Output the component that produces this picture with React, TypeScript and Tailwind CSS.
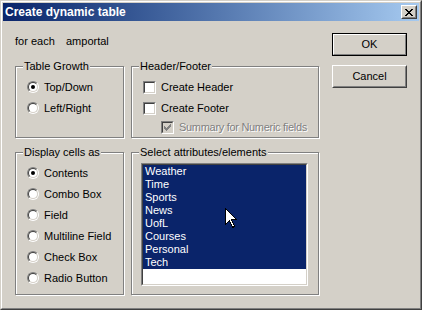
import type { ReactNode } from 'react';

const FONT = "font-['Liberation_Sans',Arial,sans-serif]";

function Radio({ checked = false }: { checked?: boolean }) {
  return (
    <span className="flex h-3 w-3 shrink-0 rounded-full border border-t-[#808080] border-l-[#808080] border-r-white border-b-white">
      <span className="flex h-full w-full items-center justify-center rounded-full border border-t-[#404040] border-l-[#404040] border-r-[#d4d0c8] border-b-[#d4d0c8] bg-white">
        {checked && <span className="h-1 w-1 rounded-full bg-black" />}
      </span>
    </span>
  );
}

function Check({ checked = false, disabled = false }: { checked?: boolean; disabled?: boolean }) {
  return (
    <span className="flex h-[13px] w-[13px] shrink-0 border border-t-[#808080] border-l-[#808080] border-r-white border-b-white">
      <span className={`flex h-full w-full items-center justify-center border border-t-[#404040] border-l-[#404040] border-r-[#d4d0c8] border-b-[#d4d0c8] ${disabled ? 'bg-[#d4d0c8]' : 'bg-white'}`}>
        {checked && (
          <svg width="7" height="7" viewBox="0 0 7 7" shapeRendering="crispEdges">
            <path
              d="M6 0h1v1h-1z M5 1h2v1h-2z M0 2h1v1h-1z M4 2h3v1h-3z M0 3h2v1h-2z M3 3h3v1h-3z M0 4h5v1h-5z M1 5h3v1h-3z M2 6h1v1h-1z"
              fill={disabled ? '#808080' : '#000'}
            />
          </svg>
        )}
      </span>
    </span>
  );
}

function Group({ label, className = '', children }: { label: string; className?: string; children?: ReactNode }) {
  return (
    <div className={`relative border border-[#808080] shadow-[inset_1px_1px_0_#fff,1px_1px_0_#fff] ${className}`}>
      <span className="absolute -top-[7px] left-[7px] bg-[#d4d0c8] px-px">{label}</span>
      {children}
    </div>
  );
}

function RadioRow({ label, checked }: { label: string; checked?: boolean }) {
  return (
    <div className="flex h-3 items-center gap-[5px]">
      <Radio checked={checked} />
      <span>{label}</span>
    </div>
  );
}

function CloseButton() {
  return (
    <span className="flex h-[14px] w-4 border border-t-white border-l-white border-r-[#404040] border-b-[#404040] bg-[#d4d0c8]">
      <span className="flex h-full w-full items-center justify-center border border-t-[#d4d0c8] border-l-[#d4d0c8] border-r-[#808080] border-b-[#808080]">
        <svg width="8" height="7" viewBox="0 0 8 7" shapeRendering="crispEdges">
          <path
            d="M0 0h2v1h-2z M6 0h2v1h-2z M1 1h2v1h-2z M5 1h2v1h-2z M2 2h4v1h-4z M3 3h2v1h-2z M2 4h4v1h-4z M1 5h2v1h-2z M5 5h2v1h-2z M0 6h2v1h-2z M6 6h2v1h-2z"
            fill="#000"
          />
        </svg>
      </span>
    </span>
  );
}

function Button({ label, isDefault = false }: { label: string; isDefault?: boolean }) {
  if (isDefault) {
    return (
      <button className="flex h-[23px] w-[75px] border border-black p-0">
        <span className="flex h-full w-full items-center justify-center border border-t-white border-l-white border-r-[#808080] border-b-[#808080]">
          {label}
        </span>
      </button>
    );
  }
  return (
    <button className="flex h-[23px] w-[75px] border border-t-white border-l-white border-r-[#404040] border-b-[#404040] p-0">
      <span className="flex h-full w-full items-center justify-center border border-t-[#d4d0c8] border-l-[#d4d0c8] border-r-[#808080] border-b-[#808080]">
        {label}
      </span>
    </button>
  );
}

const ITEMS = ['Weather', 'Time', 'Sports', 'News', 'UofL', 'Courses', 'Personal', 'Tech'];
const DISPLAY = ['Contents', 'Combo Box', 'Field', 'Multiline Field', 'Check Box', 'Radio Button'];

export default function App() {
  return (
    <div className={`h-[310px] w-[422px] border border-t-[#d4d0c8] border-l-[#d4d0c8] border-r-[#404040] border-b-[#404040] bg-[#d4d0c8] text-[11px] leading-[13px] text-black ${FONT}`}>
      <div className="flex h-full flex-col border border-t-white border-l-white border-r-[#808080] border-b-[#808080] p-px">
        <div className="flex h-[18px] shrink-0 items-center justify-between bg-linear-to-r from-[#0a246a] to-[#a6caf0] pr-[2px] pl-[2px]">
          <span className="text-[12px] font-bold text-white">Create dynamic table</span>
          <CloseButton />
        </div>

        <div className="flex pl-[12px]">
          <div className="flex w-[304px] flex-col">
            <div className="mt-[14px] flex h-[13px]">
              <span className="w-[51px]">for each</span>
              <span>amportal</span>
            </div>

            <div className="mt-[18px] flex gap-[7px]">
              <Group label="Table Growth" className="h-[72px] w-[109px]">
                <div className="flex flex-col gap-[9px] pt-[14px] pl-[11px]">
                  <RadioRow label="Top/Down" checked />
                  <RadioRow label="Left/Right" />
                </div>
              </Group>
              <Group label="Header/Footer" className="h-[72px] w-[188px]">
                <div className="flex flex-col pt-[14px] pl-[11px]">
                  <div className="flex h-[13px] items-center gap-[5px]">
                    <Check />
                    <span>Create Header</span>
                  </div>
                  <div className="mt-[8px] flex h-[13px] items-center gap-[5px]">
                    <Check />
                    <span>Create Footer</span>
                  </div>
                  <div className="mt-[6px] flex h-[13px] items-center gap-[5px] pl-[18px]">
                    <Check checked disabled />
                    <span className="tracking-[-0.3px] text-[#808080] [text-shadow:1px_1px_0_#fff]">Summary for Numeric fields</span>
                  </div>
                </div>
              </Group>
            </div>

            <div className="mt-[14px] flex gap-[7px]">
              <Group label="Display cells as" className="h-[143px] w-[109px]">
                <div className="flex flex-col gap-[9px] pt-[14px] pl-[11px]">
                  {DISPLAY.map((d, i) => (
                    <RadioRow key={d} label={d} checked={i === 0} />
                  ))}
                </div>
              </Group>
              <Group label="Select attributes/elements" className="h-[143px] w-[188px]">
                <div className="relative mt-[10px] ml-[9px] h-[123px] w-[167px] border border-t-[#808080] border-l-[#808080] border-r-white border-b-white">
                  <div className="h-full w-full border border-t-[#404040] border-l-[#404040] border-r-[#d4d0c8] border-b-[#d4d0c8] bg-white">
                    {ITEMS.map((it) => (
                      <div key={it} className="h-[13px] bg-[#0a246a] pl-[2px] text-white">
                        {it}
                      </div>
                    ))}
                  </div>
                  <svg
                    className="absolute top-[44px] left-[83px]"
                    width="13"
                    height="21"
                    viewBox="0 0 13 21"
                    shapeRendering="crispEdges"
                  >
                    <polygon
                      points="0.5,0.5 0.5,16.5 4.5,12.5 7.5,19.5 9.5,18.5 6.5,11.5 11.5,11.5"
                      fill="#fff"
                      stroke="#000"
                      strokeWidth="1"
                    />
                  </svg>
                </div>
              </Group>
            </div>
          </div>

          <div className="mt-[12px] ml-[13px] flex flex-col gap-[9px]">
            <Button label="OK" isDefault />
            <Button label="Cancel" />
          </div>
        </div>
      </div>
    </div>
  );
}
